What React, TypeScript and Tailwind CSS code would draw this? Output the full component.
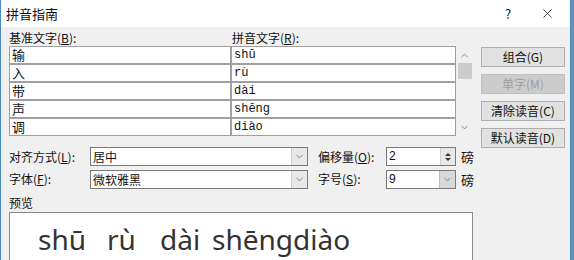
import { ChevronDown, ChevronUp, X } from "lucide-react";

const rows = [
  { base: "输", ruby: "shū" },
  { base: "入", ruby: "rù" },
  { base: "带", ruby: "dài" },
  { base: "声", ruby: "shēng" },
  { base: "调", ruby: "diào" },
];

const ui = { fontFamily: '"Noto Sans CJK SC", "Noto Sans", sans-serif' };
const cellFont = { fontFamily: '"Liberation Mono", "Noto Sans CJK SC", monospace' };

function Btn({ label, disabled }: { label: string; disabled?: boolean }) {
  return (
    <div
      className={
        "h-[20px] w-[84px] flex items-center justify-center text-[12px] border " +
        (disabled ? "bg-[#cccccc] border-[#bfbfbf] text-[#a0a0a0]" : "bg-[#e1e1e1] border-[#adadad] text-[#111]")
      }
    >
      {label}
    </div>
  );
}

function Combo({ value, width }: { value: string; width: string }) {
  return (
    <div className={"h-[19px] flex bg-white border border-[#7a7a7a] " + width}>
      <div className="flex-1 pl-[2px] text-[12px] leading-[17px]">{value}</div>
      <div className="w-[16px] flex items-center justify-center bg-[#e8e8e8] border-l border-[#cfcfcf]">
        <ChevronDown size={11} strokeWidth={1.5} className="text-[#555]" />
      </div>
    </div>
  );
}

export default function App() {
  return (
    <div className="w-[574px] h-[260px] overflow-hidden flex bg-[#6b8fae] text-[#111]" style={ui}>
      <div className="w-[571px] h-full flex flex-col bg-[#f0f0f0] border-l border-r border-[#4a8bc4]">
        {/* Title bar */}
        <header className="h-[27px] shrink-0 bg-white flex items-center pl-[5px]">
          <span className="text-[13px] flex-1">拼音指南</span>
          <span className="text-[13px] w-[44px] text-center mr-[10px]">?</span>
          <X size={15} strokeWidth={1.2} className="mr-[15px]" />
        </header>

        <div className="flex-1 pl-[8px] pt-[2px]">
          <div className="flex text-[12px] h-[17px] leading-[17px]">
            <span className="w-[223px]">基准文字(<u>B</u>):</span>
            <span>拼音文字(<u>R</u>):</span>
          </div>

          <div className="flex items-start">
            {/* Grid */}
            <div className="w-[447px] flex flex-col bg-[#a0a0a0] gap-[2px] py-[1px] px-[1px]">
              {rows.map((r) => (
                <div key={r.base} className="flex gap-[2px] h-[16px]">
                  <div className="w-[220px] bg-white text-[13px] leading-[16px] pl-[2px]">{r.base}</div>
                  <div className="flex-1 bg-white text-[12px] leading-[16px] pl-[2px]" style={cellFont}>
                    {r.ruby}
                  </div>
                </div>
              ))}
            </div>
            {/* Scrollbar */}
            <div className="w-[17px] h-[90px] flex flex-col items-center bg-[#f0f0f0]">
              <ChevronUp size={11} strokeWidth={1.5} className="mt-[4px] text-[#606060]" />
              <div className="w-[14px] h-[16px] mt-[2px] bg-[#cdcdcd]" />
              <div className="flex-1" />
              <ChevronDown size={11} strokeWidth={1.5} className="mb-[3px] text-[#606060]" />
            </div>
            {/* Buttons */}
            <div className="ml-[8px] flex flex-col gap-[7px] pt-[1px]">
              <Btn label="组合(G)" />
              <Btn label="单字(M)" disabled />
              <Btn label="清除读音(C)" />
              <Btn label="默认读音(D)" />
            </div>
          </div>

          {/* Options */}
          <div className="flex flex-col gap-[3px] -mt-[1px] text-[12px]">
            <div className="flex items-center">
              <span className="w-[81px]">对齐方式(<u>L</u>):</span>
              <Combo value="居中" width="w-[218px]" />
              <span className="w-[68px] ml-[10px]">偏移量(<u>O</u>):</span>
              <div className="w-[70px] h-[19px] flex bg-white border border-[#7a7a7a]">
                <div className="flex-1 pl-[2px] leading-[17px]" style={{ fontFamily: '"Liberation Sans", sans-serif' }}>2</div>
                <div className="w-[15px] flex flex-col items-center justify-center bg-[#e8e8e8] border-l border-[#cfcfcf]">
                  <span className="block w-0 h-0 border-l-[3px] border-r-[3px] border-b-[3px] border-l-transparent border-r-transparent border-b-[#333] mb-[2px]" />
                  <span className="block w-0 h-0 border-l-[3px] border-r-[3px] border-t-[3px] border-l-transparent border-r-transparent border-t-[#333]" />
                </div>
              </div>
              <span className="ml-[5px] text-[13px]">磅</span>
            </div>
            <div className="flex items-center">
              <span className="w-[81px]">字体(<u>F</u>):</span>
              <Combo value="微软雅黑" width="w-[218px]" />
              <span className="w-[68px] ml-[10px]">字号(<u>S</u>):</span>
              <div className="w-[70px] h-[19px] flex bg-white border border-[#7a7a7a]">
                <div className="flex-1 pl-[2px] leading-[17px]" style={{ fontFamily: '"Liberation Sans", sans-serif' }}>9</div>
                <div className="w-[16px] flex items-center justify-center bg-[#d9d9d9] border-l border-[#bdbdbd]">
                  <ChevronDown size={11} strokeWidth={1.5} className="text-[#555]" />
                </div>
              </div>
              <span className="ml-[5px] text-[13px]">磅</span>
            </div>
          </div>

          {/* Preview */}
          <div className="text-[12px] mt-[6px] leading-[15px]">预览</div>
          <div className="w-[464px] h-[60px] mt-[2px] bg-white border border-[#8a8a8a] pl-[28px] pt-[9px]">
            <div className="flex text-[28px] leading-[34px] text-[#333]" style={{ fontFamily: '"Noto Sans", "Open Sans", sans-serif' }}>
              <span className="w-[69px]">shū</span>
              <span className="w-[53px]">rù</span>
              <span className="w-[52px]">dài</span>
              <span>shēngdiào</span>
            </div>
          </div>
        </div>
      </div>
    </div>
  );
}
